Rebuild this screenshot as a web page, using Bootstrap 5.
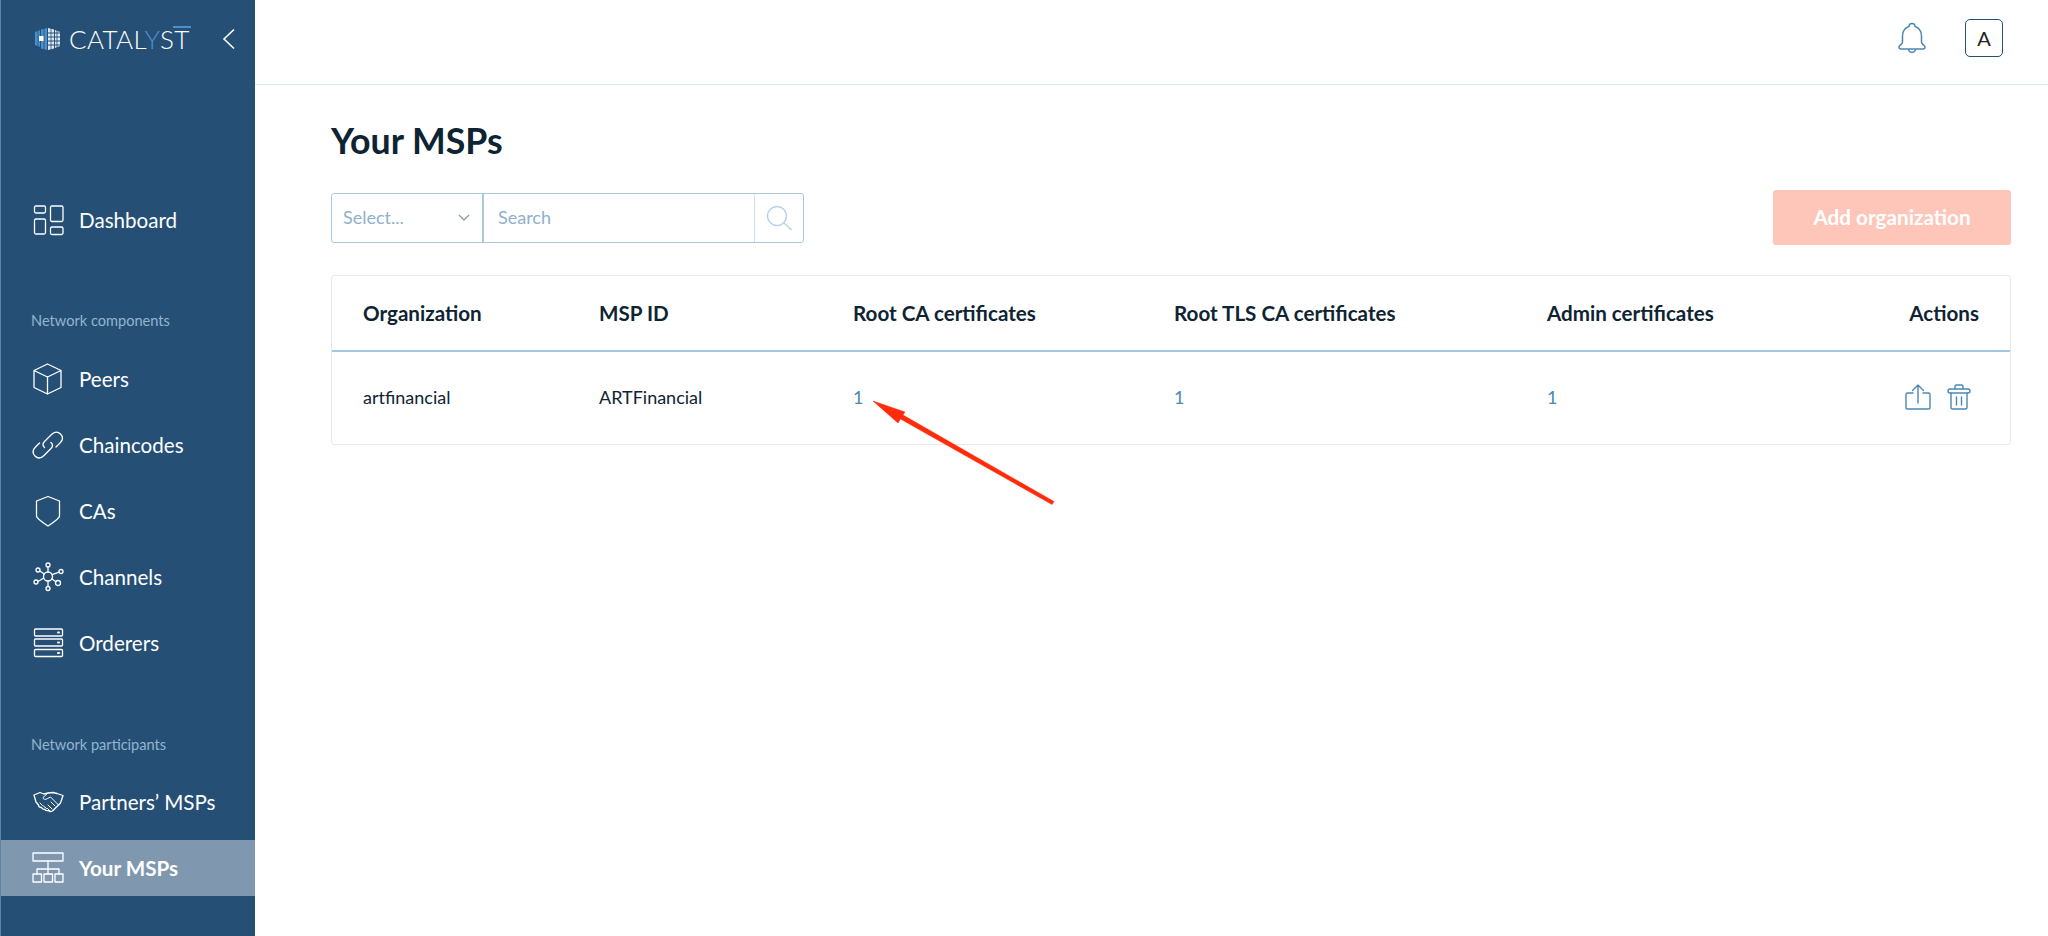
<!DOCTYPE html>
<html lang="en">
<head>
<meta charset="utf-8">
<title>Your MSPs</title>
<link href="https://cdn.jsdelivr.net/npm/bootstrap@5.3.0/dist/css/bootstrap.min.css" rel="stylesheet">
<style>
html,body{height:100%;}
body{font-family:Lato,"Liberation Sans",sans-serif;color:#0e2433;background:#fff;overflow:hidden;}
.shell{height:936px;position:relative;}
.side{width:255px;flex:none;background:#254f75;color:#fff;border-left:1px solid #5f83a3;}
.brand{height:78px;padding-left:33px;padding-right:19px;}
.brand-txt{font-size:26px;font-weight:300;letter-spacing:.35px;line-height:1;margin-left:8px;color:#fff;}
.brand-txt i{font-style:normal;color:#4a90cf;}
.brand-t{position:relative;}
.brand-t::before{content:"";position:absolute;left:-1px;right:-1px;top:3px;height:2px;background:#4a90cf;}
.side-nav{padding-top:114px;}
.side-link{height:56px;margin-bottom:10px;padding-left:30px;color:#fff;font-size:20.6px;text-decoration:none;}
.side-link svg{width:34px;height:34px;flex:none;margin-right:14px;fill:none;stroke:#fff;stroke-width:1.3;stroke-linejoin:round;stroke-linecap:round;}
.side-link.on{background:#7f98b0;font-weight:700;margin-bottom:0;}
.side-head{font-size:14.6px;color:#93b5cf;padding-left:30px;line-height:20px;}
.head-a{margin-top:63px;margin-bottom:20px;}
.head-b{margin-top:64px;margin-bottom:19px;}
.topbar{height:85px;flex:none;border-bottom:1px solid #d5e9f3;padding-right:45px;padding-bottom:8px;}
.bell{width:34px;height:34px;margin-right:36px;fill:none;stroke:#4a88b2;stroke-width:1.5;stroke-linejoin:round;}
.avatar{width:38px;height:38px;border:1.5px solid #254f75;border-radius:5px;font-size:20px;font-weight:400;color:#222;}
.work{padding:0 37px 0 76px;}
.page-title{font-size:35.7px;font-weight:700;line-height:44px;margin:34px 0 0;color:#0e2433;}
.tools{margin-top:27px;height:55px;}
.filter{height:50px;width:473px;border:1.5px solid #a9c8de;border-radius:3px;font-size:18px;color:#8fb0cc;}
.filter-sel{width:152px;padding:0 11px;border-right:2px solid #a9c8de;}
.filter-in{flex:1;padding:0 14px;}
.filter-btn{width:49px;border-left:1.5px solid #cfe0ec;}
.add-btn{width:238px;height:55px;background:#fec6b9;border:0;color:#fff;font-size:20.7px;font-weight:700;border-radius:3px;opacity:1;}
.msp-box{margin-top:30px;border:1px solid #e8e8e8;border-radius:3px;overflow:hidden;}
.msp-tbl{margin:0;table-layout:fixed;width:100%;}
.msp-tbl th{height:75px;font-size:20.6px;font-weight:700;color:#0e2433;vertical-align:middle;border-bottom:2px solid #a3c7df;padding:0;}
.msp-tbl td{height:93px;font-size:18px;color:#0e2433;vertical-align:middle;padding:0 0 2px;border:0;}
.msp-tbl .first{padding-left:31px;}
.msp-tbl .last{padding-right:31px;}
.lnk{color:#4a88b2;text-decoration:none;}
.acts{gap:13px;padding-right:6px;}
.acts svg{width:28px;height:28px;fill:none;stroke:#4a88b2;stroke-width:1.4;stroke-linejoin:round;stroke-linecap:round;}
.pointer{position:absolute;left:860px;top:390px;width:200px;height:120px;}
</style>
</head>
<body>
<div class="shell d-flex">
  <aside class="side d-flex flex-column">
    <div class="brand d-flex align-items-center">
      <svg width="27" height="24" viewBox="0 0 27 24" aria-hidden="true">
        <path d="M1 5l5-2v17l-5-2z" fill="#4a90cf"/><path d="M7 2.500l6-1.500v22l-6-1.500z" fill="#4a90cf"/>
        <rect x="5" y="9" width="5" height="5" fill="#fff"/>
        <path d="M14 1l6 1.500v19l-6 1.500z" fill="#dce9f3"/><path d="M21 3l5 2v14l-5 2z" fill="#dce9f3"/>
        <path d="M14 6h12M14 10h12M14 14h12M14 18h12" stroke="#254f75" stroke-width="1"/>
        <path d="M4 3v18M10 1v22M17 1v22M23 3v18" stroke="#254f75" stroke-width=".8"/>
      </svg>
      <span class="brand-txt">CATAL<i>Y</i>S<span class="brand-t">T</span></span>
      <svg class="ms-auto" width="14" height="22" viewBox="0 0 14 22" fill="none" stroke="#fff" stroke-width="1.6" aria-hidden="true"><path d="M12 1.500 2 11l10 9.500"/></svg>
    </div>
    <nav class="side-nav">
      <a class="side-link d-flex align-items-center" href="#">
        <svg viewBox="0 0 34 34"><rect x="3.500" y="3" width="11" height="7" rx="1.500"/><rect x="19.500" y="3" width="12.500" height="15.500" rx="1.500"/><rect x="3.500" y="16" width="11" height="15" rx="1.500"/><rect x="19.500" y="24" width="12.500" height="7.500" rx="1.500"/></svg>
        Dashboard</a>
      <div class="side-head head-a">Network components</div>
      <a class="side-link d-flex align-items-center" href="#">
        <svg viewBox="0 0 34 34"><path d="M16.500 2 30 8.500v17L16.500 32 3 25.500v-17zM3 8.500 16.500 15 30 8.500M16.500 15v17"/></svg>
        Peers</a>
      <a class="side-link d-flex align-items-center" href="#">
        <svg viewBox="0 0 34 34"><path d="M13.500 19.500c-2-2-2-4 0-6l7-7c3-3 6.500-3 9-.5s2.500 6-.5 9l-4 4"/><path d="M20 14.500c2 2 2 4 0 6l-7 7c-3 3-6.500 3-9 .5s-2.500-6 .5-9l4-4"/></svg>
        Chaincodes</a>
      <a class="side-link d-flex align-items-center" href="#">
        <svg viewBox="0 0 34 34"><path d="M17 2.500 28.500 7v15c0 2.500-7 7-11.500 10C12.500 29 5.500 24.500 5.500 22V7z"/></svg>
        CAs</a>
      <a class="side-link d-flex align-items-center" href="#">
        <svg viewBox="0 0 34 34"><circle cx="17" cy="16.500" r="4.500"/><circle cx="17" cy="5" r="2"/><circle cx="17" cy="28.500" r="2"/><circle cx="7" cy="10" r="2"/><circle cx="30" cy="11.500" r="2"/><circle cx="5" cy="22" r="2"/><circle cx="27" cy="23" r="2.500"/><path d="M17 7v5M17 21v5.500M8.800 11l4.500 3M28.100 12.200l-7 2.500M7 21.500l5.700-3.500M24.900 21.700l-4.200-3"/></svg>
        Channels</a>
      <a class="side-link d-flex align-items-center" href="#">
        <svg viewBox="0 0 34 34"><rect x="3.500" y="3" width="28" height="7" rx="1"/><rect x="3.500" y="13" width="28" height="7" rx="1"/><rect x="3.500" y="23.500" width="28" height="7" rx="1"/><path d="M27 6.500h1M27 16.500h1M27 27h1" stroke-width="2"/></svg>
        Orderers</a>
      <div class="side-head head-b">Network participants</div>
      <a class="side-link d-flex align-items-center" href="#">
        <svg viewBox="0 0 34 34"><path d="M3 10 9 7.500l4 1.500 4-1 5-.5 4 1 6 2-2.500 7.500-3 3-5 5c-2 1-3 .5-4-.5-2 .5-3 0-3.500-1-2 0-3-.5-3.500-2-2 0-3-1-3-2.500L5 17z"/><path d="M17 8l-5 4.500c0 2 2.500 2.500 4.500 1l3-1.500 8 8M9 18l2.500 2.500M12.500 21l3 2.500M16.500 23.500l2.500 2.500M20 17l4 4M17 20l4 4" stroke-width="1"/></svg>
        Partners’ MSPs</a>
      <a class="side-link on d-flex align-items-center" href="#">
        <svg viewBox="0 0 34 34"><rect x="2" y="2" width="30" height="8"/><path d="M17 10v13M6 23v-5h22v5"/><rect x="2" y="23" width="8.500" height="8"/><rect x="13" y="23" width="8.500" height="8"/><rect x="24" y="23" width="8" height="8"/></svg>
        Your MSPs</a>
    </nav>
  </aside>
  <main class="flex-grow-1 d-flex flex-column">
    <header class="topbar d-flex align-items-center justify-content-end">
      <svg class="bell" viewBox="0 0 34 34" aria-hidden="true"><path d="M14 5.500c0-4 6-4 6 0 4.500 1.500 6.500 5 6.500 9.500v6c0 2.500 3.500 3 3.500 5 0 1.500-1 2-2 2H6c-1 0-2-.5-2-2 0-2 3.500-2.500 3.500-5v-6c0-4.500 2-8 6.500-9.500z"/><path d="M13.500 28c.5 4.500 6.500 4.500 7 0"/></svg>
      <div class="avatar d-flex align-items-center justify-content-center">A</div>
    </header>
    <div class="work">
      <h1 class="page-title">Your MSPs</h1>
      <div class="tools d-flex justify-content-between align-items-center">
        <div class="filter d-flex align-items-stretch">
          <div class="filter-sel d-flex align-items-center justify-content-between">Select...
            <svg width="14" height="9" viewBox="0 0 14 9" fill="none" stroke="#7f9fb8" stroke-width="1.300" aria-hidden="true"><path d="M2 2l5 5 5-5"/></svg>
          </div>
          <div class="filter-in d-flex align-items-center">Search</div>
          <div class="filter-btn d-flex align-items-center justify-content-center">
            <svg width="28" height="28" viewBox="0 0 28 28" fill="none" stroke="#b9d3e4" stroke-width="1.500" aria-hidden="true"><circle cx="12" cy="12" r="9.500"/><path d="M19 19l7.500 7"/></svg>
          </div>
        </div>
        <button class="btn add-btn" type="button">Add organization</button>
      </div>
      <div class="msp-box">
        <table class="table msp-tbl">
          <colgroup><col style="width:267px"><col style="width:254px"><col style="width:321px"><col style="width:373px"><col style="width:243px"><col></colgroup>
          <thead><tr>
            <th class="first">Organization</th><th>MSP ID</th><th>Root CA certificates</th><th>Root TLS CA certificates</th><th>Admin certificates</th><th class="last text-end">Actions</th>
          </tr></thead>
          <tbody><tr>
            <td class="first">artfinancial</td><td>ARTFinancial</td><td><a class="lnk" href="#">1</a></td><td><a class="lnk" href="#">1</a></td><td><a class="lnk" href="#">1</a></td>
            <td class="last"><div class="acts d-flex justify-content-end">
              <svg viewBox="0 0 28 28" aria-hidden="true"><path d="M9 10H3.500A1.500 1.500 0 0 0 2 11.500v13A1.500 1.500 0 0 0 3.500 26h21a1.500 1.500 0 0 0 1.500-1.500v-13a1.500 1.500 0 0 0-1.500-1.500H19M14 20V2M8.500 7.500 14 2l5.500 5.500"/></svg>
              <svg viewBox="0 0 28 28" aria-hidden="true"><path d="M10 6V3.500A1.500 1.500 0 0 1 11.500 2h5A1.500 1.500 0 0 1 18 3.500V6M6 10v14.500A1.500 1.500 0 0 0 7.500 26h13a1.500 1.500 0 0 0 1.500-1.500V10M11.500 14v8M16.500 14v8"/><rect x="3" y="6" width="22" height="4" rx="2"/></svg>
            </div></td>
          </tr></tbody>
        </table>
      </div>
    </div>
  </main>
  <svg class="pointer" viewBox="0 0 200 120" aria-hidden="true"><path d="M13 11 45 22 43 25 194 111.500 192 114.500 40.500 29 38 33z" fill="#ff2b0a" stroke="#ff2b0a" stroke-width=".5" stroke-linejoin="round"/></svg>
</div>
<script src="https://cdn.jsdelivr.net/npm/bootstrap@5.3.0/dist/js/bootstrap.bundle.min.js"></script>
</body>
</html>
